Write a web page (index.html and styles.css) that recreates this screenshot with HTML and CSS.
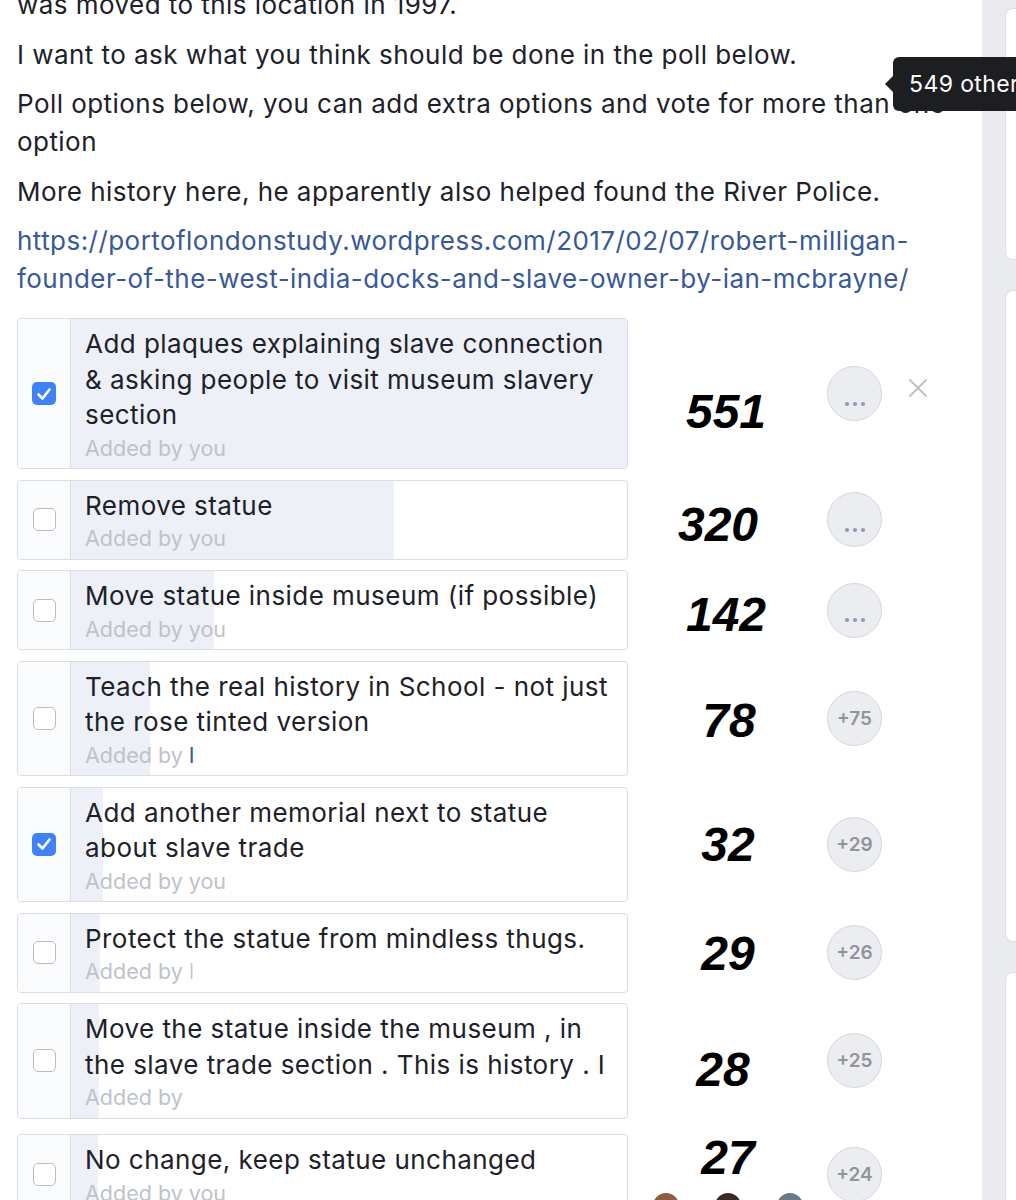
FILE: index.html
```html
<!DOCTYPE html>
<html lang="en">
<head>
<meta charset="utf-8">
<title>Poll</title>
<link rel="stylesheet" href="styles.css">
</head>
<body>
<div class="page">
  <main class="main">
    <div class="post">
      <p>was moved to this location in 1997.</p>
      <p>I want to ask what you think should be done in the poll below.</p>
      <p>Poll options below, you can add extra options and vote for more than one option</p>
      <p>More history here, he apparently also helped found the River Police.</p>
      <p><a class="link" href="#">https://portoflondonstudy.wordpress.com/2017/02/07/robert-milligan-founder-of-the-west-india-docks-and-slave-owner-by-ian-mcbrayne/</a></p>
    </div>

    <div class="poll">
      <div class="opt">
        <div class="box">
          <div class="chk"><span class="cb on"><svg viewBox="0 0 24 24" width="24" height="24"><polyline points="6.5,12.5 10.5,16.5 17.5,7.5" fill="none" stroke="#fff" stroke-width="2.6" stroke-linecap="round" stroke-linejoin="round"/></svg></span></div>
          <div class="body">
            <div class="fill" style="width:100%"></div>
            <div class="txt">Add plaques explaining slave connection &amp; asking people to visit museum slavery section</div>
            <div class="by">Added by you</div>
          </div>
        </div>
        <div class="num n1">551</div>
        <div class="circ"><svg class="dots" viewBox="0 0 22 6" width="22" height="6"><circle cx="3" cy="3" r="2.1"/><circle cx="11" cy="3" r="2.1"/><circle cx="19" cy="3" r="2.1"/></svg></div>
        <div class="x"><svg viewBox="0 0 20 20" width="20" height="20"><path d="M1.5 1.5 L18.5 18.5 M18.5 1.5 L1.5 18.5" stroke="#bec3c9" stroke-width="2" fill="none"/></svg></div>
      </div>

      <div class="opt">
        <div class="box">
          <div class="chk"><span class="cb"></span></div>
          <div class="body">
            <div class="fill" style="width:58.1%"></div>
            <div class="txt">Remove statue</div>
            <div class="by">Added by you</div>
          </div>
        </div>
        <div class="num n2">320</div>
        <div class="circ"><svg class="dots" viewBox="0 0 22 6" width="22" height="6"><circle cx="3" cy="3" r="2.1"/><circle cx="11" cy="3" r="2.1"/><circle cx="19" cy="3" r="2.1"/></svg></div>
      </div>

      <div class="opt">
        <div class="box">
          <div class="chk"><span class="cb"></span></div>
          <div class="body">
            <div class="fill" style="width:25.8%"></div>
            <div class="txt">Move statue inside museum (if possible)</div>
            <div class="by">Added by you</div>
          </div>
        </div>
        <div class="num n3">142</div>
        <div class="circ"><svg class="dots" viewBox="0 0 22 6" width="22" height="6"><circle cx="3" cy="3" r="2.1"/><circle cx="11" cy="3" r="2.1"/><circle cx="19" cy="3" r="2.1"/></svg></div>
      </div>

      <div class="opt">
        <div class="box">
          <div class="chk"><span class="cb"></span></div>
          <div class="body">
            <div class="fill" style="width:14.2%"></div>
            <div class="txt">Teach the real history in School - not just the rose tinted version</div>
            <div class="by">Added by <span class="name">I</span></div>
          </div>
        </div>
        <div class="num n4">78</div>
        <div class="circ">+75</div>
      </div>

      <div class="opt">
        <div class="box">
          <div class="chk"><span class="cb on"><svg viewBox="0 0 24 24" width="24" height="24"><polyline points="6.5,12.5 10.5,16.5 17.5,7.5" fill="none" stroke="#fff" stroke-width="2.6" stroke-linecap="round" stroke-linejoin="round"/></svg></span></div>
          <div class="body">
            <div class="fill" style="width:5.8%"></div>
            <div class="txt">Add another memorial next to statue about slave trade</div>
            <div class="by">Added by you</div>
          </div>
        </div>
        <div class="num n5">32</div>
        <div class="circ">+29</div>
      </div>

      <div class="opt">
        <div class="box">
          <div class="chk"><span class="cb"></span></div>
          <div class="body">
            <div class="fill" style="width:5.3%"></div>
            <div class="txt">Protect the statue from mindless thugs.</div>
            <div class="by">Added by <span class="thin">I</span></div>
          </div>
        </div>
        <div class="num n6">29</div>
        <div class="circ">+26</div>
      </div>

      <div class="opt">
        <div class="box">
          <div class="chk"><span class="cb"></span></div>
          <div class="body">
            <div class="fill" style="width:5.1%"></div>
            <div class="txt">Move the statue inside the museum , in the slave trade section . This is history . I</div>
            <div class="by">Added by</div>
          </div>
        </div>
        <div class="num n7">28</div>
        <div class="circ">+25</div>
      </div>

      <div class="opt">
        <div class="box">
          <div class="chk"><span class="cb"></span></div>
          <div class="body">
            <div class="fill" style="width:4.9%"></div>
            <div class="txt">No change, keep statue unchanged</div>
            <div class="by">Added by you</div>
          </div>
        </div>
        <div class="num n8">
          <span>27</span>
          <div class="pile"><span class="av a1"></span><span class="av a2"></span><span class="av a3"></span></div>
        </div>
        <div class="circ">+24</div>
      </div>
    </div>
  </main>

  <aside class="side">
    <div class="card c1"></div>
    <div class="card c2"></div>
    <div class="card c3"></div>
  </aside>

  <div class="tip">549 other</div>
</div>
</body>
</html>
```

FILE: styles.css
```css
html, body {
  margin: 0;
  padding: 0;
  overflow: hidden;
}

body {
  font-family: Inter, "Noto Sans", "Liberation Sans", sans-serif;
  color: #1d2129;
  background: #fff;
}

.page {
  position: relative;
  display: flex;
  width: 1016px;
  height: 1200px;
  overflow: hidden;
}

.main {
  width: 982px;
  flex: none;
  box-sizing: border-box;
  padding: 0 12px 0 17px;
  background: #fff;
}

.post {
  margin-top: -14px;
  font-size: 26px;
  letter-spacing: 0.45px;
  line-height: 38px;
}

.post p {
  margin: 0 0 11.5px;
}

.post p:last-child {
  margin-bottom: 0;
}

.link {
  color: #385898;
  text-decoration: none;
}

.poll {
  margin-top: 20px;
  display: flex;
  flex-direction: column;
  gap: 10.5px;
}

.opt {
  display: flex;
  align-items: center;
}

.box {
  width: 611px;
  flex: none;
  display: flex;
  box-sizing: border-box;
  border: 1px solid #dadde1;
  border-radius: 4px;
  background: #fff;
  overflow: hidden;
}

.chk {
  width: 52px;
  flex: none;
  background: #fafbfc;
  border-right: 1px solid #dadde1;
  display: flex;
  align-items: center;
  justify-content: center;
}

.cb {
  width: 23px;
  height: 23px;
  box-sizing: border-box;
  border: 1px solid #b8bcc1;
  border-radius: 5px;
  background: #fff;
  display: flex;
  align-items: center;
  justify-content: center;
}

.cb.on {
  width: 24px;
  height: 23px;
  border: none;
  background: #3d83f5;
}

.body {
  position: relative;
  flex: 1;
  padding: 7px 12px 4px 14px;
}

.fill {
  position: absolute;
  left: 0;
  top: 0;
  bottom: 0;
  background: #edf0f6;
}

.txt,
.by {
  position: relative;
}

.txt {
  font-size: 26px;
  letter-spacing: 0.45px;
  line-height: 35.5px;
  color: #1d2129;
}

.by {
  font-size: 21.5px;
  line-height: 31.5px;
  color: #bec3c9;
}

.name {
  color: #385898;
}

.thin {
  color: #bec3c9;
  font-weight: 300;
}

.num {
  width: 128px;
  margin-left: 34px;
  flex: none;
  text-align: center;
  font-family: "Liberation Sans", Arial, sans-serif;
  font-style: italic;
  font-weight: bold;
  font-size: 48px;
  line-height: 48px;
  color: #000;
}

.n1 { margin-top: 36px; }
.n2 { margin-top: 10px; padding-right: 16px; box-sizing: border-box; }
.n3 { margin-top: 10px; }
.n4 { margin-top: 6px; padding-left: 6px; box-sizing: border-box; }
.n5 { margin-top: 2px; padding-left: 4px; box-sizing: border-box; }
.n6 { margin-top: 2px; padding-left: 4px; box-sizing: border-box; }
.n7 { margin-top: 18px; padding-right: 6px; box-sizing: border-box; }

.n8 {
  align-self: flex-start;
  margin-top: 5px;
  display: flex;
  flex-direction: column;
  align-items: center;
  padding-left: 4px;
  box-sizing: border-box;
}

.pile {
  display: flex;
  gap: 36px;
  margin-top: 11px;
}

.av {
  width: 26px;
  height: 26px;
  border-radius: 50%;
}

.a1 { background: #8c5c46; }
.a2 { background: #3b2a21; }
.a3 { background: #6b7a87; }

.circ {
  width: 55px;
  height: 55px;
  flex: none;
  margin-left: 37px;
  box-sizing: border-box;
  border-radius: 50%;
  background: #ebedf0;
  border: 1.5px solid #d3d6db;
  display: flex;
  align-items: center;
  justify-content: center;
  font-size: 19px;
  font-weight: 600;
  color: #90949c;
}

.dots {
  fill: #8d9bb3;
  margin-top: 20px;
}

.x {
  width: 20px;
  height: 20px;
  margin-left: 26px;
  margin-bottom: 12px;
  flex: none;
}

.x svg {
  display: block;
}

.side {
  flex: 1;
  background: #e9ebee;
  padding-left: 23px;
  display: flex;
  flex-direction: column;
}

.card {
  background: #fff;
  border: 1px solid #dddfe2;
  border-right: none;
  border-radius: 8px 0 0 8px;
  flex: none;
}

.c1 { margin-top: 8px; height: 250px; }
.c2 { margin-top: 30px; height: 650px; }
.c3 { margin-top: 30px; height: 400px; }

.tip {
  position: absolute;
  left: 893px;
  top: 57px;
  height: 54px;
  padding: 0 40px 0 16px;
  background: #1c1e21;
  color: #fff;
  font-size: 23px;
  letter-spacing: 0.4px;
  line-height: 54px;
  border-radius: 6px;
  white-space: nowrap;
}

.tip::before {
  content: "";
  position: absolute;
  left: -8px;
  top: 19px;
  border-style: solid;
  border-width: 8px 8px 8px 0;
  border-color: transparent #1c1e21 transparent transparent;
}
```
